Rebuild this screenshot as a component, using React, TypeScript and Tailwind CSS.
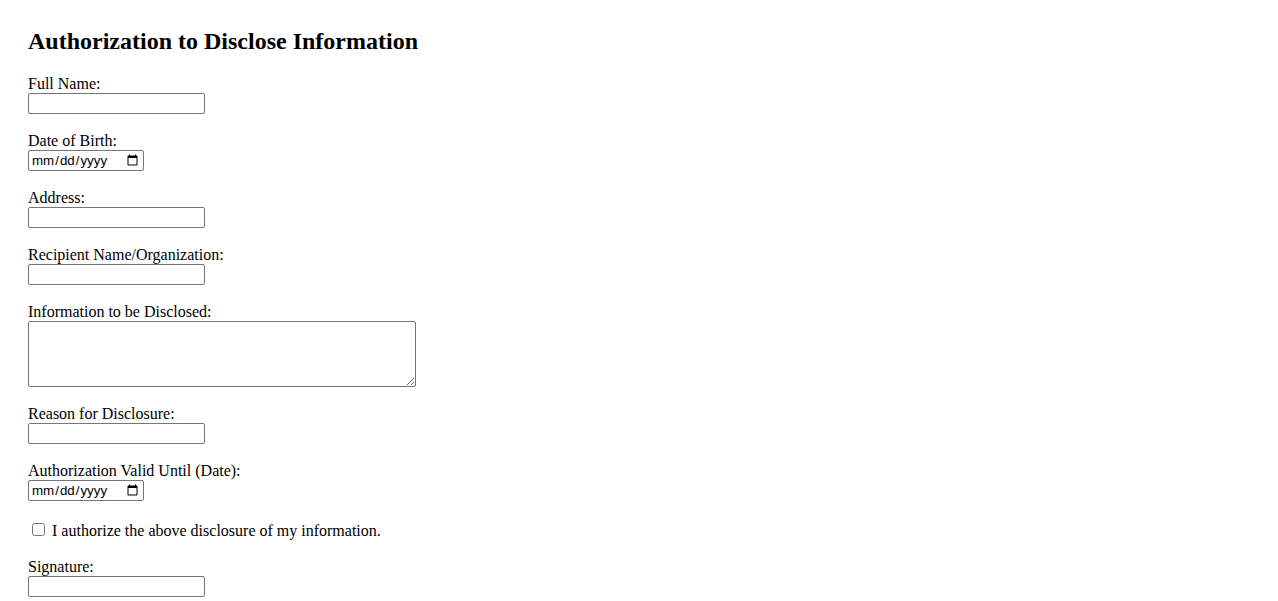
const serif = "font-['Liberation_Serif','Times_New_Roman',serif]"

function TextField({ label }: { label: string }) {
  return (
    <div className="mt-[18px] flex flex-col items-start">
      <label className="block h-[18px] text-[16px] leading-[18px]">{label}</label>
      <input
        type="text"
        className="h-[21px] w-[177px] rounded-[2px] border border-[#767676] bg-white px-[2px] font-['Liberation_Sans',Arial,sans-serif] text-[13.33px]"
      />
    </div>
  )
}

function DateField({ label }: { label: string }) {
  return (
    <div className="mt-[18px] flex flex-col items-start">
      <label className="block h-[18px] text-[16px] leading-[18px]">{label}</label>
      <input
        type="date"
        className="h-[21px] w-[116px] rounded-[2px] border border-[#767676] bg-white px-[2px] font-['Liberation_Sans',Arial,sans-serif] text-[13.33px] leading-[17px]"
      />
    </div>
  )
}

export default function App() {
  return (
    <div className={`min-h-screen bg-white px-[28px] pt-[27px] text-black ${serif}`}>
      <h2 className="h-[28px] text-[24px] font-bold leading-[28px]">
        Authorization to Disclose Information
      </h2>
      <form className="mt-[2px] flex flex-col">
        <TextField label="Full Name:" />
        <DateField label="Date of Birth:" />
        <TextField label="Address:" />
        <TextField label="Recipient Name/Organization:" />
        <div className="mt-[18px] flex flex-col items-start">
          <label className="block h-[18px] text-[16px] leading-[18px]">Information to be Disclosed:</label>
          <textarea
            rows={4}
            className="h-[66px] w-[388px] resize rounded-[2px] border border-[#767676] bg-white px-[2px] py-[2px] font-['Liberation_Mono',monospace] text-[13.33px]"
          />
        </div>
        <TextField label="Reason for Disclosure:" />
        <DateField label="Authorization Valid Until (Date):" />
        <div className="mt-[21px] flex h-[18px] items-start">
          <input type="checkbox" className="ml-[4px] mr-[7px] mt-[1px] h-[13px] w-[13px]" />
          <label className="text-[16px] leading-[18px]">I authorize the above disclosure of my information.</label>
        </div>
        <TextField label="Signature:" />
      </form>
    </div>
  )
}
